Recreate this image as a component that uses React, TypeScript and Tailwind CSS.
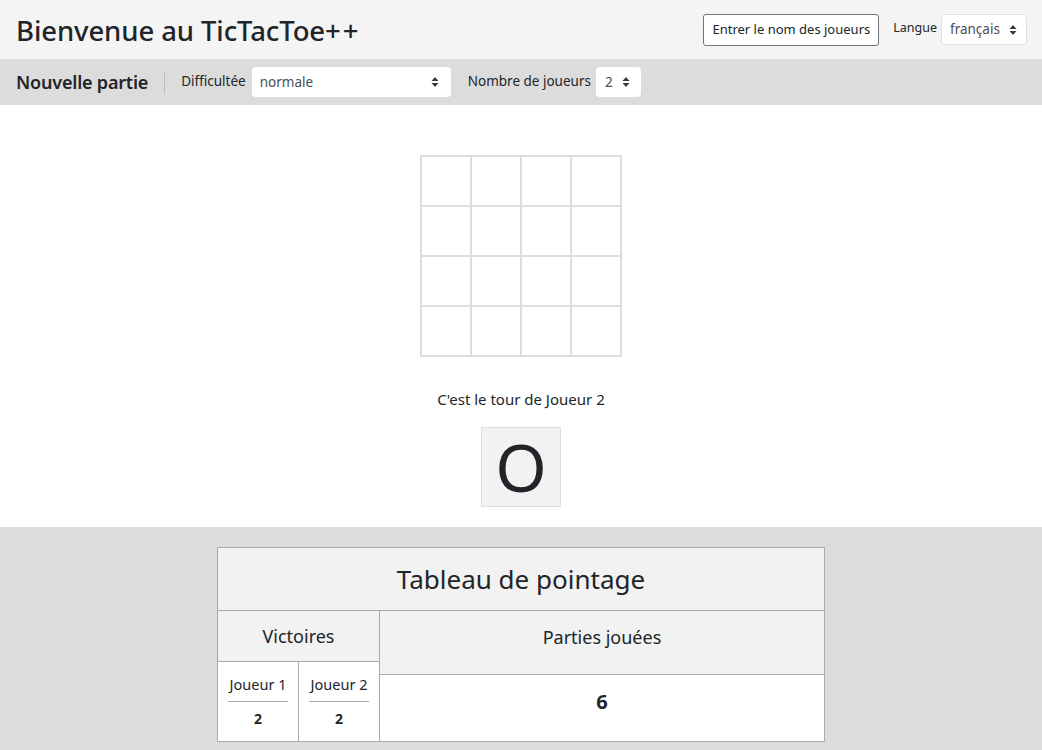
import React from "react";

const Sort = () => (
  <svg width="8" height="12" viewBox="0 0 8 12" className="shrink-0">
    <path d="M4 1 L7.5 5 H0.5 Z" fill="#343a40" />
    <path d="M4 11 L7.5 7 H0.5 Z" fill="#343a40" />
  </svg>
);

export default function App() {
  return (
    <div className="min-h-[750px] flex flex-col text-[#212529]" style={{ fontFamily: '"Noto Sans", "Open Sans", sans-serif' }}>
      {/* Header */}
      <header className="h-[59px] bg-[#f4f4f4] flex items-center pl-4 pr-[15px]">
        <h1 className="text-[27.5px] leading-none font-medium tracking-[-0.1px] mt-[3px]">
          Bienvenue au TicTacToe<span className="tracking-[2px]">++</span>
        </h1>
        <div className="ml-auto flex items-center">
          <button className="h-[32px] px-[8px] border border-[#6c757d] rounded-[3px] bg-white text-[13px] leading-none">
            Entrer le nom des joueurs
          </button>
          <span className="ml-[14px] text-[12.5px] -mt-[2px]">Langue</span>
          <div className="ml-[4px] h-[31px] w-[86px] bg-white border border-[#dee2e6] rounded-[4px] flex items-center pl-[8px] pr-[9px] text-[13.5px] text-[#495057] justify-between">
            <span>français</span>
            <Sort />
          </div>
        </div>
      </header>

      {/* Nav */}
      <nav className="h-[46px] bg-[#dcdcdc] flex items-center pl-4">
        <span className="text-[18px] font-semibold tracking-[-0.2px]">Nouvelle partie</span>
        <div className="ml-[16px] w-px h-[23px] bg-[#bdbdbd]" />
        <span className="ml-[16px] text-[13.5px] -mt-[2px]">Difficultée</span>
        <div className="ml-[6px] h-[30px] w-[199px] bg-white rounded-[4px] flex items-center justify-between pl-[8px] pr-[12px] text-[13.5px] text-[#495057]">
          <span>normale</span>
          <Sort />
        </div>
        <span className="ml-[17px] text-[13.5px] -mt-[2px]">Nombre de joueurs</span>
        <div className="ml-[5px] h-[30px] w-[45px] bg-white rounded-[4px] flex items-center justify-between pl-[9px] pr-[11px] text-[13.5px] text-[#495057]">
          <span>2</span>
          <Sort />
        </div>
      </nav>

      {/* Game */}
      <main className="bg-white h-[422px] flex flex-col items-center pt-[50px]">
        <div className="grid grid-cols-4 gap-[2px] p-[2px] bg-[#dddddd]">
          {Array.from({ length: 16 }).map((_, i) => (
            <div key={i} className="w-[48px] h-[48px] bg-white" />
          ))}
        </div>
        <p className="mt-[32px] text-[15px] leading-[20px]">C'est le tour de Joueur 2</p>
        <div className="mt-[18px] w-[80px] h-[80px] bg-[#f2f2f2] border border-[#dddddd] flex items-center justify-center">
          <span className="text-[66px] leading-none font-normal -mt-[3px]">O</span>
        </div>
      </main>

      {/* Scores */}
      <section className="flex-1 bg-[#dcdcdc] pt-[20px] flex justify-center">
        <div className="w-[608px] border border-[#aaaaaa] self-start">
          <div className="h-[63px] bg-[#f2f2f2] flex items-center justify-center border-b border-[#aaaaaa]">
            <span className="text-[26px] font-normal">Tableau de pointage</span>
          </div>
          <div className="flex">
            <div className="w-[162px] border-r border-[#aaaaaa] flex flex-col">
              <div className="h-[51px] bg-[#f2f2f2] border-b border-[#aaaaaa] flex items-center justify-center">
                <span className="text-[18px] font-normal">Victoires</span>
              </div>
              <div className="flex bg-white h-[79px]">
                {["Joueur 1", "Joueur 2"].map((n, i) => (
                  <div key={n} className={`flex-1 flex flex-col items-center pt-[12px] ${i === 0 ? "border-r border-[#aaaaaa]" : ""}`}>
                    <span className="text-[14.5px] font-normal leading-[20px]">{n}</span>
                    <div className="w-[60px] h-px bg-[#aaaaaa] mt-[7px]" />
                    <span className="mt-[7px] text-[14px] font-bold leading-[20px]">2</span>
                  </div>
                ))}
              </div>
            </div>
            <div className="flex-1 flex flex-col">
              <div className="h-[64px] bg-[#f2f2f2] border-b border-[#aaaaaa] flex items-start justify-center pt-[13px]">
                <span className="text-[18px] font-normal">Parties jouées</span>
              </div>
              <div className="h-[66px] bg-white flex items-start justify-center pt-[12px]">
                <span className="text-[20px] font-bold">6</span>
              </div>
            </div>
          </div>
        </div>
      </section>
    </div>
  );
}
